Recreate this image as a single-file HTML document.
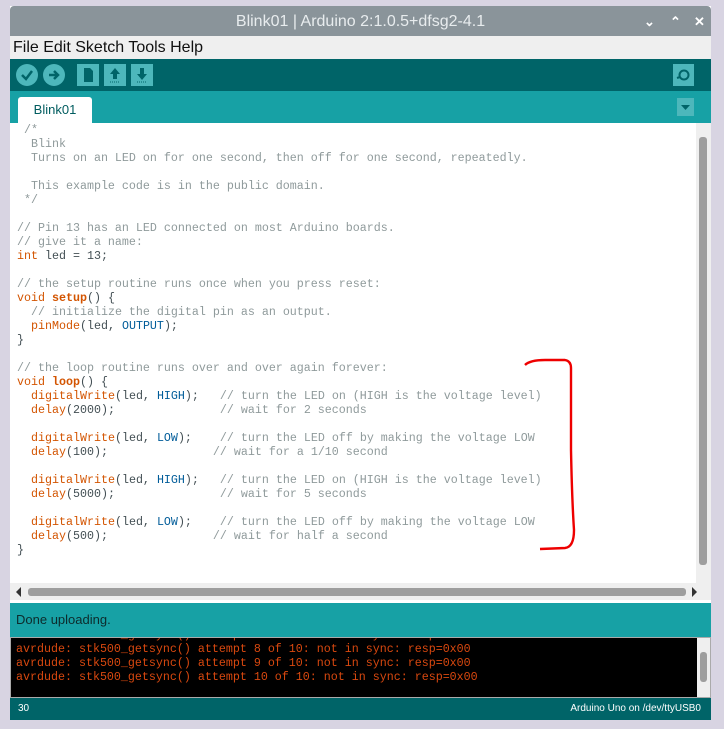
<!DOCTYPE html>
<html><head><meta charset="utf-8">
<style>
*{margin:0;padding:0;box-sizing:border-box}
body{width:724px;height:729px;background:#d8d4e2;position:relative;overflow:hidden;font-family:"Liberation Sans",sans-serif}
.win{position:absolute;left:10px;top:6px;width:701px;height:714px;background:#fff}
.title{position:absolute;left:0;top:0;width:701px;height:30px;background:#8a949a;color:#e8ecee;font-size:16px;text-align:center;line-height:31px;border-radius:4px 4px 0 0}
.tb{position:absolute;top:0;font-size:13px;color:#fff;font-weight:bold;line-height:31px}
.menu{position:absolute;left:0;top:30px;width:701px;height:23px;background:#efefef;font-size:16px;line-height:23px;padding-left:3px;color:#111}
.tool{position:absolute;left:0;top:53px;width:701px;height:32px;background:#006468}
.ic{position:absolute;top:5px;width:22px;height:22px;background:#4db7bb}
.circ{border-radius:50%}
.tabs{position:absolute;left:0;top:85px;width:701px;height:32px;background:#17a1a5}
.tab{position:absolute;left:8px;top:6px;width:74px;height:26px;background:#fff;border-radius:3px 3px 0 0;color:#005c5f;font-size:13px;text-align:center;line-height:25px}
.code{position:absolute;left:7px;top:117px;font-family:"Liberation Mono",monospace;font-size:11.67px;line-height:14px;color:#434f54;white-space:pre}
.c{color:#8f9a9b}.k{color:#d35400}.f{color:#d35400}.b{color:#00979c}.h{color:#005c99}
.vs{position:absolute;left:686px;top:117px;width:15px;height:460px;background:#efefef}
.hs{position:absolute;left:0;top:577px;width:701px;height:17px;background:#efefef}
.status{position:absolute;left:0;top:597px;width:701px;height:34px;background:#17a1a5;font-size:13px;line-height:34px;padding-left:6px;color:#0d2b2c}
.cons{position:absolute;left:0;top:631px;width:701px;height:61px;background:#000;border:1px solid #aaa;overflow:hidden}
.ct{position:absolute;left:5px;top:-10px;font-family:"Liberation Mono",monospace;font-size:11.67px;line-height:14px;color:#d9480f;white-space:pre}
.foot{position:absolute;left:0;top:692px;width:701px;height:22px;background:#006468;color:#fff;font-size:10px;line-height:22px}
</style></head><body>
<div class="win">
<div class="title">Blink01 | Arduino 2:1.0.5+dfsg2-4.1
<span class="tb" style="left:634px">&#8964;</span><span class="tb" style="left:660px">&#8963;</span><span class="tb" style="left:684px">&#10005;</span></div>
<div class="menu">File Edit Sketch Tools Help</div>
<div class="tool">
<div class="ic circ" style="left:6px"><svg width="22" height="22"><path d="M6 11 L10 15 L16 7" stroke="#006468" stroke-width="2.5" fill="none"/></svg></div>
<div class="ic circ" style="left:33px"><svg width="22" height="22"><path d="M6 11 H14 M11 7 L15 11 L11 15" stroke="#006468" stroke-width="2.5" fill="none"/></svg></div>
<div class="ic" style="left:67px"><svg width="22" height="22"><path d="M7 4 H13 L16 7 V18 H7 Z" fill="#006468"/></svg></div>
<div class="ic" style="left:94px"><svg width="22" height="22"><path d="M11 4 L16 10 H13 V15 H9 V10 H6 Z" fill="#006468"/><path d="M6 18 H16" stroke="#006468" stroke-dasharray="1 1"/></svg></div>
<div class="ic" style="left:121px"><svg width="22" height="22"><path d="M11 16 L16 10 H13 V4 H9 V10 H6 Z" fill="#006468"/><path d="M6 18 H16" stroke="#006468" stroke-dasharray="1 1"/></svg></div>
<div class="ic" style="left:663px;width:21px"><svg width="21" height="22"><circle cx="11" cy="11" r="4.5" stroke="#006468" stroke-width="2" fill="none"/><path d="M4 14 L7 13" stroke="#006468" stroke-width="2"/></svg></div>
</div>
<div class="tabs"><div class="tab">Blink01</div>
<div style="position:absolute;left:667px;top:7px;width:17px;height:18px;background:#4db7bb"><svg width="17" height="18"><path d="M4 7 H13 L8.5 12 Z" fill="#006468"/></svg></div></div>
<div class="code"><span class="c"> /*
  Blink
  Turns on an LED on for one second, then off for one second, repeatedly.

  This example code is in the public domain.
 */

// Pin 13 has an LED connected on most Arduino boards.
// give it a name:</span>
<span class="k">int</span> led = 13;

<span class="c">// the setup routine runs once when you press reset:</span>
<span class="k">void</span> <span class="f"><b>setup</b></span>() {
  <span class="c">// initialize the digital pin as an output.</span>
  <span class="f">pinMode</span>(led, <span class="h">OUTPUT</span>);
}

<span class="c">// the loop routine runs over and over again forever:</span>
<span class="k">void</span> <span class="f"><b>loop</b></span>() {
  <span class="f">digitalWrite</span>(led, <span class="h">HIGH</span>);   <span class="c">// turn the LED on (HIGH is the voltage level)</span>
  <span class="f">delay</span>(2000);               <span class="c">// wait for 2 seconds</span>

  <span class="f">digitalWrite</span>(led, <span class="h">LOW</span>);    <span class="c">// turn the LED off by making the voltage LOW</span>
  <span class="f">delay</span>(100);               <span class="c">// wait for a 1/10 second</span>

  <span class="f">digitalWrite</span>(led, <span class="h">HIGH</span>);   <span class="c">// turn the LED on (HIGH is the voltage level)</span>
  <span class="f">delay</span>(5000);               <span class="c">// wait for 5 seconds</span>

  <span class="f">digitalWrite</span>(led, <span class="h">LOW</span>);    <span class="c">// turn the LED off by making the voltage LOW</span>
  <span class="f">delay</span>(500);               <span class="c">// wait for half a second</span>
}</div>
<div class="vs"><div style="position:absolute;left:3px;top:14px;width:8px;height:428px;background:#9e9e9e;border-radius:3px"></div></div>
<div class="hs"><div style="position:absolute;left:18px;top:5px;width:658px;height:8px;background:#9e9e9e;border-radius:3px"></div>
<svg style="position:absolute;left:5px;top:3px" width="8" height="12"><path d="M6 1 L1 6 L6 11Z" fill="#333"/></svg>
<svg style="position:absolute;left:680px;top:3px" width="8" height="12"><path d="M2 1 L7 6 L2 11Z" fill="#333"/></svg></div>
<div class="status">Done uploading.</div>
<div class="cons"><div class="ct">avrdude: stk500_getsync() attempt 7 of 10: not in sync: resp=0x00
avrdude: stk500_getsync() attempt 8 of 10: not in sync: resp=0x00
avrdude: stk500_getsync() attempt 9 of 10: not in sync: resp=0x00
avrdude: stk500_getsync() attempt 10 of 10: not in sync: resp=0x00</div>
<div style="position:absolute;right:0;top:0;width:13px;height:59px;background:#efefef"><div style="position:absolute;left:3px;top:14px;width:7px;height:30px;background:#9e9e9e;border-radius:3px"></div></div></div>
<div class="foot"><span style="position:absolute;left:8px">30</span><span style="position:absolute;right:10px">Arduino Uno on /dev/ttyUSB0</span></div>
</div>
<svg style="position:absolute;left:0;top:0" width="724" height="729"><path d="M525 365 Q530 360 545 360 L565 360 Q571 361 571 368 L571 450 Q572 500 574 530 Q574 547 565 548 L540 549" stroke="#e00" stroke-width="2.4" fill="none"/></svg>
</body></html>
